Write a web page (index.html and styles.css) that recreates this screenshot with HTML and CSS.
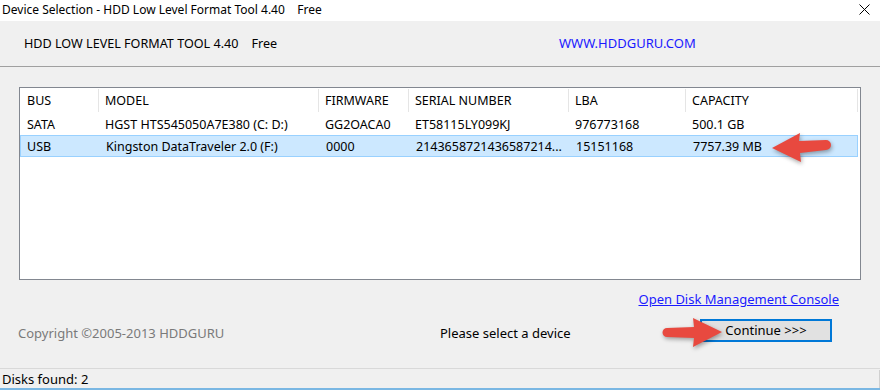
FILE: index.html
```html
<!DOCTYPE html>
<html>
<head>
<meta charset="utf-8">
<title>Device Selection</title>
<link rel="stylesheet" href="styles.css">
</head>
<body>
<div class="window">
  <div class="titlebar">
    <span class="title">Device Selection - HDD Low Level Format Tool 4.40&nbsp;&nbsp;&nbsp;&nbsp;Free</span>
    <span class="close"><svg width="11" height="11" viewBox="0 0 11 11"><path d="M0.5 0.5 L10.5 10.5 M10.5 0.5 L0.5 10.5" stroke="#000" stroke-width="1" fill="none"/></svg></span>
  </div>
  <div class="header">
    <span class="product">HDD LOW LEVEL FORMAT TOOL 4.40&nbsp;&nbsp;&nbsp;&nbsp;Free</span>
    <span class="site">WWW.HDDGURU.COM</span>
  </div>
  <div class="content">
    <div class="list">
      <div class="row head">
        <div class="cell">BUS</div>
        <div class="cell">MODEL</div>
        <div class="cell">FIRMWARE</div>
        <div class="cell">SERIAL NUMBER</div>
        <div class="cell">LBA</div>
        <div class="cell">CAPACITY</div>
      </div>
      <div class="row">
        <div class="cell">SATA</div>
        <div class="cell">HGST HTS545050A7E380 (C: D:)</div>
        <div class="cell">GG2OACA0</div>
        <div class="cell">ET58115LY099KJ</div>
        <div class="cell">976773168</div>
        <div class="cell">500.1 GB</div>
      </div>
      <div class="row selected">
        <div class="cell">USB</div>
        <div class="cell">Kingston DataTraveler 2.0 (F:)</div>
        <div class="cell">0000</div>
        <div class="cell">2143658721436587214...</div>
        <div class="cell">15151168</div>
        <div class="cell">7757.39 MB</div>
      </div>
    </div>
    <div class="linkrow"><a class="link" href="#">Open Disk Management Console</a></div>
    <div class="actions">
      <span class="copyright">Copyright ©2005-2013 HDDGURU</span>
      <span class="prompt">Please select a device</span>
      <button class="continue">Continue &gt;&gt;&gt;</button>
    </div>
  </div>
  <div class="statusbar">
    <span>Disks found: 2</span>
    <span class="grip"></span>
  </div>
  <svg class="arrow arrow-left" width="75" height="42" viewBox="0 0 75 42">
    <path d="M7 20 L35 5 L34 13 L61 12 A5 5 0 0 1 61 22 L35 25 L36 34 Z" fill="#e8493f"/>
  </svg>
  <svg class="arrow arrow-right" width="75" height="42" viewBox="0 0 75 42">
    <path d="M67 20 L38 6 L39 15 L12 16 A4.5 4.5 0 0 0 12 25 L39 26 L38 35 Z" fill="#e8493f"/>
  </svg>
</div>
</body>
</html>
```

FILE: styles.css
```css
* { box-sizing: border-box; }
html, body { margin: 0; padding: 0; }
body {
  width: 880px;
  height: 390px;
  overflow: hidden;
  background: #f0f0f0;
  font-family: "Noto Sans", "Open Sans", sans-serif;
  font-size: 12px;
  color: #000;
}
.window {
  position: relative;
  width: 880px;
  height: 390px;
  display: flex;
  flex-direction: column;
}
.titlebar {
  height: 21px;
  background: #fff;
  display: flex;
  align-items: center;
  justify-content: space-between;
  padding: 0 10px 2px 2px;
}
.title { font-size: 12px; }
.close { display: flex; }
.header {
  height: 46px;
  display: flex;
  align-items: center;
  border-bottom: 1px solid #a0a0a0;
  padding: 0 0 1px 24px;
  font-size: 12.6px;
}
.product { width: 535px; }
.site { color: #1a1aff; font-size: 13px; }
.content {
  flex: 1;
  display: flex;
  flex-direction: column;
  padding: 20px 19px 0 19px;
}
.list {
  height: 193px;
  background: #fff;
  border: 1px solid #828790;
  display: flex;
  flex-direction: column;
  font-size: 12.5px;
}
.row {
  display: grid;
  grid-template-columns: 79px 220px 90px 160px 117px 172px;
  height: 22px;
  align-items: center;
}
.row .cell {
  padding-left: 6px;
  white-space: nowrap;
  overflow: hidden;
}
.row .cell:first-child { padding-left: 7px; }
.row.head {
  height: 25px;
}
.row.head .cell {
  border-right: 1px solid #e5e5e5;
  height: 23px;
  display: flex;
  align-items: center;
}
.row.selected {
  background: #cce8ff;
  border: 1px solid #99d1ff;
  width: 838px;
}
.row.selected .cell:first-child { padding-left: 6px; }
.linkrow {
  display: flex;
  justify-content: flex-end;
  padding: 10px 22px 0 0;
  height: 30px;
}
.link {
  color: #1a1aff;
  text-decoration: underline;
  font-size: 13px;
}
.actions {
  display: flex;
  align-items: center;
  height: 36px;
  padding-top: 6px;
}
.copyright {
  color: #7a7a7a;
  font-size: 13px;
  width: 422px;
  margin-top: 4px;
  margin-left: -1px;
}
.prompt {
  font-size: 13px;
  width: 260px;
  margin-top: 4px;
}
.continue {
  width: 132px;
  height: 23px;
  background: #e1e1e1;
  border: 2px solid #0078d7;
  font-family: inherit;
  font-size: 13px;
  padding: 0;
  margin-top: -2px;
  color: #000;
}
.statusbar {
  height: 22px;
  margin-top: 1px;
  border-top: 1px solid #d9d9d9;
  border-bottom: 2px solid #7ab7e3;
  display: flex;
  align-items: center;
  justify-content: space-between;
  padding: 0 0 0 2px;
  font-size: 13px;
}
.grip {
  width: 1px;
  height: 18px;
  background: #d0d0d0;
}
.arrow {
  position: absolute;
  filter: drop-shadow(1px 2px 2px rgba(0,0,0,0.35));
}
.arrow-left { left: 765px; top: 128px; }
.arrow-right { left: 655px; top: 312px; }
```
